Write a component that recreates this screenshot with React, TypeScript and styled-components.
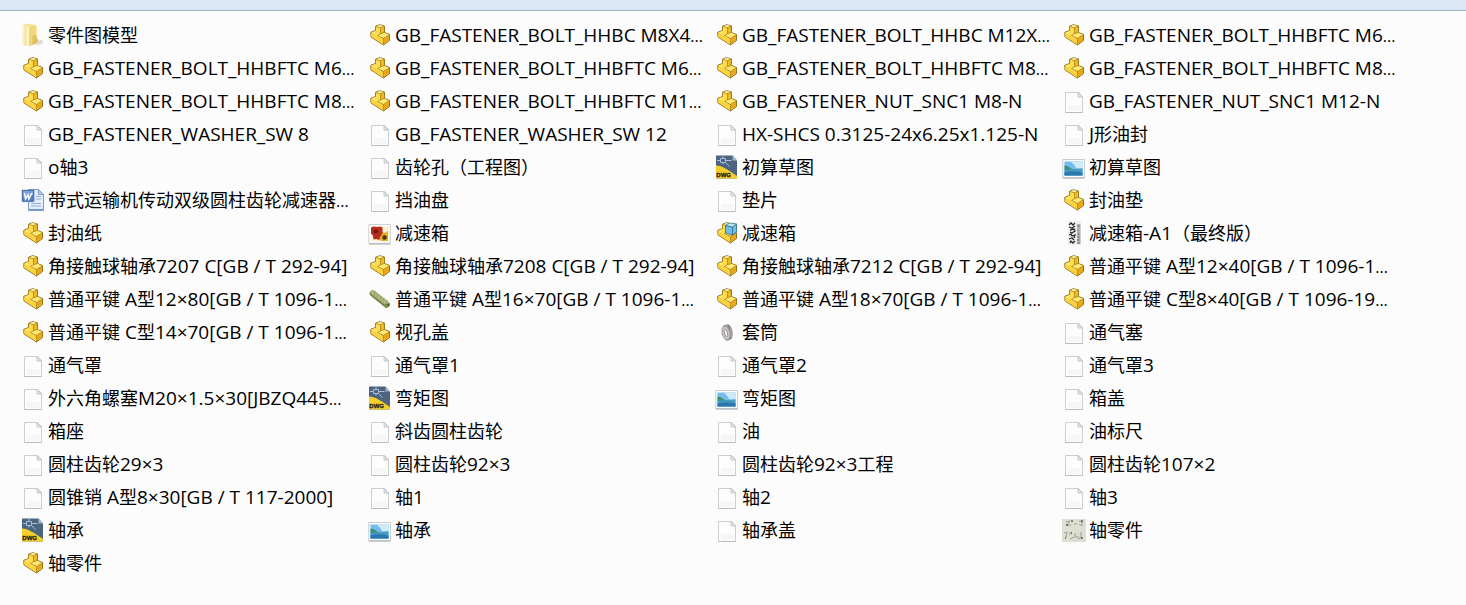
import React from "react";
import styled, { createGlobalStyle } from "styled-components";

const GlobalStyle = createGlobalStyle`
  body {
    margin: 0;
    background: #fcfcfc;
    color: #000;
    font-family: "Open Sans", "Noto Sans CJK SC", sans-serif;
  }
`;

const Toolbar = styled.header`
  height: 10px;
  background: #dae7f6;
  border-bottom: 1px solid #a3b1c4;
`;

const FileGrid = styled.ul`
  list-style: none;
  margin: 0;
  padding: 7px 0 24px 21px;
  display: grid;
  grid-template-columns: repeat(auto-fill, 347px);
  grid-auto-rows: 33px;
`;

const FileItem = styled.li`
  display: flex;
  align-items: center;
  gap: 3px;
  min-width: 0;
`;

const IconSvg = styled.svg`
  flex: none;
  width: 24px;
  height: 24px;
`;

const FileName = styled.span`
  font-size: 18px;
  line-height: 26px;
  white-space: pre;
`;

const Run = styled.span<{ $size: number }>`
  font-size: ${(p) => p.$size}px;
  line-height: 16px;
`;

type Kind =
  | "folder" | "part" | "file" | "dwg" | "image" | "word" | "flowers"
  | "assembly" | "drawing" | "key" | "ring" | "sheet";

const PartShape = () => (
  <g strokeLinejoin="round">
    <path d="M2.800 9.300 7.500 7.500V3.300L11.500 1.700l5 1.300v6.500l5 2v6L15.500 22 3 14Z" fill="#f8cb30" stroke="#8a6d1c" strokeWidth="1" />
    <path d="M7.800 3.400 11.500 2l4.600 1.100-3.600 1.500Z" fill="#fff09a" />
    <path d="M7.800 3.600l4.700 1.200v6.400l-3.200 1.500-1.500-.7Z" fill="#fddc4d" />
    <path d="M12.700 4.800 16.200 3.400v6l-3.500 1.500Z" fill="#f0b823" />
    <path d="M3.300 9.600 7.500 8v3.700l2 1.300 3.200-2 3.300-1.300 5 2-5.500 3.300-2.500-1.300v3Z" fill="#ffe873" />
    <path d="m3.200 10 12.100 6.500v5L3.200 13.800Z" fill="#fbd340" />
    <path d="m15.700 15.700 5.400-3.500v5l-5.400 4.100Z" fill="#e9a817" />
    <path d="m7.800 3.500 4.700 1.200 3.700-1.500M12.500 4.700v6l3.500-1.200M12.500 10.700 9.500 12.500l6 3 5.700-3.700M15.500 15.500v6" fill="none" stroke="#a17d20" strokeWidth=".7" />
  </g>
);

const art: Record<Kind, React.ReactNode> = {
  folder: (
    <>
      <path d="M15 19.500 20 16.500l2.500 2-1.500 2.500-5 1.500Z" fill="#dcdde3" />
      <path d="M1.500 2.500 4 1v21.500l-2.500-.7Z" fill="#faefc0" />
      <path d="M3.500 1.500 7 .5l8 1.500 1 1v17l-8 3-4.500-.5Z" fill="#f6e49c" />
      <path d="M5.500 3 8 4.500V23l-2.500-.8Z" fill="#fdf3c5" />
      <path d="M8 4.500 14.500 2.500v11l3 3.500v3L8 23Z" fill="#eed67d" />
      <path d="m11.500 13 3-1.500 2.500 6-2 3-3.500 1.500Z" fill="#dfc062" />
    </>
  ),
  part: <PartShape />,
  assembly: (
    <>
      <PartShape />
      <path d="m10.500 4.500 4-2.500 7 1V11l-4 3-7-2Z" fill="#74bde0" stroke="#28688e" strokeWidth=".8" />
      <path d="m11 4.500 3.700-2 6.300.8L17.500 5.800Z" fill="#bce6f5" />
      <path d="m10.500 4.500 7 1.500v8M17.500 6l4-3" fill="none" stroke="#28688e" strokeWidth=".8" />
    </>
  ),
  file: (
    <>
      <path d="M3.500 3.500h13l4 4v16h-17Z" fill="#fdfdfd" stroke="#cbcdce" />
      <path d="M6 16h13v6H6Z" fill="#f5f6f6" />
      <path d="M16 3.500v4.500h4.500Z" fill="#e4e6e7" stroke="#bbbdbf" strokeWidth=".8" />
      <path d="M3.500 23.500h17" stroke="#b9bbbd" />
    </>
  ),
  dwg: (
    <>
      <path d="M1 .5h16.500l4.500 5v18H1Z" fill="#4d6480" />
      <path d="M17.500.5v5H22Z" fill="#a3b5c6" />
      <path d="M1 10.500c6 0 13 5 21 10.500v2.500H1Z" fill="#f7cf2b" />
      <path d="M5.500 3.500h5v4h-5ZM2 5.500h3.500m5 0h6M8 1v2.500m0 4v2m2.500-2 4 4" fill="none" stroke="#a9bfd6" />
      <text x="1.300" y="22.300" fontFamily="Liberation Sans, sans-serif" fontSize="6" fontWeight="700" fill="#1f2118" stroke="#1f2118" strokeWidth=".3">DWG</text>
    </>
  ),
  image: (
    <>
      <path d="M.8 4.500h21.700v18.300H.8Z" fill="#fcfdff" stroke="#c5ccd3" />
      <path d="M2.500 6.500h18v14h-18Z" fill="#74bdea" />
      <path d="M9 6.500h11.500V13l-6 .5-2-3Z" fill="#cfeaf8" />
      <path d="M2.500 10.500c4 0 5 3 11 4.500h-11Z" fill="#3b8e74" />
      <path d="M2.500 14.800 20.500 13.500v7h-18Z" fill="#459dc4" />
      <path d="M2.500 17.500c6-2 12-1 18 0v3h-18Z" fill="#2c78ae" />
      <path d="M1 23h21.500" stroke="#a4abb1" />
    </>
  ),
  word: (
    <>
      <path d="M7.500 1.500h10l5 5v16h-15Z" fill="#e3edfc" stroke="#7f9cc8" />
      <path d="M17.500 1.500v5h5Z" fill="#b9cff0" stroke="#6c8dbb" strokeWidth=".8" />
      <path d="M15 8.500h5M15 11h5M10 15.500h10M10 18h10" stroke="#94b1de" />
      <path d="M8 21.500h14" stroke="#6f95d0" />
      <path d="M1.300 2.300h11.500v11H1.300Z" fill="#537fbf" stroke="#4068a3" />
      <path d="M2 3h10v4L2 9Z" fill="#7ca3d8" />
      <path d="m3.500 5 1 6 2.500-4 .8 4L11 5" fill="none" stroke="#fff" strokeWidth="1.500" />
    </>
  ),
  flowers: (
    <>
      <path d="M.8 3.500h21.500v18.800H.8Z" fill="#fcfcfa" stroke="#d0d0cc" />
      <path d="M3 5.500h17.500V20H3Z" fill="#faefd0" />
      <path d="M3 6.500 6 5.500l3 .5 3-.5 2.500 1v4l1 3-3 2-1 3.500-3-1-3 .5-.5-4-2-2Z" fill="#b52b1d" />
      <circle cx="8" cy="10.500" r="2" fill="#6b1811" />
      <path d="m14.500 11.500 3 .5 2.500-2.500V20h-7l-1.500-3 1.500-2Z" fill="#e5ae22" />
      <circle cx="16.500" cy="16.500" r="2.200" fill="#4f310f" />
      <path d="M1 23h21.500" stroke="#a6a6a3" />
    </>
  ),
  drawing: (
    <>
      <path d="M6 0h13v24H6Z" fill="#eeeeec" />
      <path d="M15 3h3.500v20H15Z" fill="#b5b6b2" />
      <path d="m7 4 2-2 2 2 2-2M7 6l3 1 3-2M8 9l4-1 1 2-3 2-2-1M7 14l2-1 1 2 3-1-1 3M7 18l3-1 2 2M8 22l1-2 2 2 2-2" fill="none" stroke="#292b29" strokeWidth="1.300" />
      <path d="M15.500 5h2m-2 4h1m-1 4h2m-2 3h2m-2 3h2m-2 3h2" stroke="#5d5f5b" />
    </>
  ),
  key: (
    <>
      <path d="M5 6.500 18.500 17.500" stroke="#7c8548" strokeWidth="6.500" strokeLinecap="round" />
      <path d="M5 5.500 18.500 16" stroke="#b1b981" strokeWidth="4.500" strokeLinecap="round" />
      <path d="m7 5-1 4m4-2-1 4m4-2-1 4m4-2-1 4m4-2-1 4" stroke="#8b945a" strokeWidth=".8" />
      <path d="m17 17 4 2.500 1-3" fill="#5d6732" />
    </>
  ),
  ring: (
    <>
      <path d="M8 5.500 13 4c4 2 6 9 4 14l-4 3c-3 0-6-5-6-9Z" fill="#a39ea1" />
      <ellipse cx="11" cy="13" rx="3.800" ry="7" fill="#cbc7ca" stroke="#918e93" strokeWidth=".7" transform="rotate(-15 11 13)" />
      <ellipse cx="11" cy="13" rx="1.500" ry="3.800" fill="#fafafa" stroke="#7f7c82" strokeWidth=".8" transform="rotate(-15 11 13)" />
      <path d="m13 5 2 4m-1 10 3-1" stroke="#77747a" />
    </>
  ),
  sheet: (
    <>
      <path d="M0 1h24v23H0Z" fill="#dedfd2" />
      <path d="m4 4 4-1-3 4h4m3-1h3m2-3 3 1v4l-3-2M2 15l3-1-1 6m3-5 2 2m-1 4 4-2m1-4v4h4m2-5v6l-3 1m-8-7 2 1" fill="none" stroke="#9a9d90" />
      <path d="M4 7h2m3-4h2m8 0h2M3 20h1m5-5h1m9 5h2" stroke="#22251f" />
    </>
  ),
};

const files: [Kind, string][] = [
  ["folder", "零件图模型"],
  ["part", "GB_FASTENER_BOLT_HHBC M8X4..."],
  ["part", "GB_FASTENER_BOLT_HHBC M12X..."],
  ["part", "GB_FASTENER_BOLT_HHBFTC M6..."],
  ["part", "GB_FASTENER_BOLT_HHBFTC M6..."],
  ["part", "GB_FASTENER_BOLT_HHBFTC M6..."],
  ["part", "GB_FASTENER_BOLT_HHBFTC M8..."],
  ["part", "GB_FASTENER_BOLT_HHBFTC M8..."],
  ["part", "GB_FASTENER_BOLT_HHBFTC M8..."],
  ["part", "GB_FASTENER_BOLT_HHBFTC M1..."],
  ["part", "GB_FASTENER_NUT_SNC1 M8-N"],
  ["file", "GB_FASTENER_NUT_SNC1 M12-N"],
  ["file", "GB_FASTENER_WASHER_SW 8"],
  ["file", "GB_FASTENER_WASHER_SW 12"],
  ["file", "HX-SHCS 0.3125-24x6.25x1.125-N"],
  ["file", "J形油封"],
  ["file", "o轴3"],
  ["file", "齿轮孔（工程图）"],
  ["dwg", "初算草图"],
  ["image", "初算草图"],
  ["word", "带式运输机传动双级圆柱齿轮减速器..."],
  ["file", "挡油盘"],
  ["file", "垫片"],
  ["part", "封油垫"],
  ["part", "封油纸"],
  ["flowers", "减速箱"],
  ["assembly", "减速箱"],
  ["drawing", "减速箱-A1（最终版）"],
  ["part", "角接触球轴承7207 C[GB / T 292-94]"],
  ["part", "角接触球轴承7208 C[GB / T 292-94]"],
  ["part", "角接触球轴承7212 C[GB / T 292-94]"],
  ["part", "普通平键 A型12×40[GB / T 1096-1..."],
  ["part", "普通平键 A型12×80[GB / T 1096-1..."],
  ["key", "普通平键 A型16×70[GB / T 1096-1..."],
  ["part", "普通平键 A型18×70[GB / T 1096-1..."],
  ["part", "普通平键 C型8×40[GB / T 1096-19..."],
  ["part", "普通平键 C型14×70[GB / T 1096-1..."],
  ["part", "视孔盖"],
  ["ring", "套筒"],
  ["file", "通气塞"],
  ["file", "通气罩"],
  ["file", "通气罩1"],
  ["file", "通气罩2"],
  ["file", "通气罩3"],
  ["file", "外六角螺塞M20×1.5×30[JBZQ445..."],
  ["dwg", "弯矩图"],
  ["image", "弯矩图"],
  ["file", "箱盖"],
  ["file", "箱座"],
  ["file", "斜齿圆柱齿轮"],
  ["file", "油"],
  ["file", "油标尺"],
  ["file", "圆柱齿轮29×3"],
  ["file", "圆柱齿轮92×3"],
  ["file", "圆柱齿轮92×3工程"],
  ["file", "圆柱齿轮107×2"],
  ["file", "圆锥销 A型8×30[GB / T 117-2000]"],
  ["file", "轴1"],
  ["file", "轴2"],
  ["file", "轴3"],
  ["dwg", "轴承"],
  ["image", "轴承"],
  ["file", "轴承盖"],
  ["sheet", "轴零件"],
  ["part", "轴零件"],
];

// Latin letters run slightly larger than the Chinese characters, the ellipsis smaller.
const renderName = (name: string) =>
  name
    .split(/(\.\.\.$|[\u2e80-\uffef]+)/)
    .filter(Boolean)
    .map((run, i) => {
      if (/^[\u2e80-\uffef]/.test(run)) return run;
      return <Run key={i} $size={run === "..." ? 16 : 19}>{run}</Run>;
    });

export default function App() {
  return (
    <>
      <GlobalStyle />
      <Toolbar />
      <main>
        <FileGrid>
          {files.map(([kind, name], index) => (
            <FileItem key={index}>
              <IconSvg viewBox="0 0 24 24" aria-hidden="true">{art[kind]}</IconSvg>
              <FileName>{renderName(name)}</FileName>
            </FileItem>
          ))}
        </FileGrid>
      </main>
    </>
  );
}
